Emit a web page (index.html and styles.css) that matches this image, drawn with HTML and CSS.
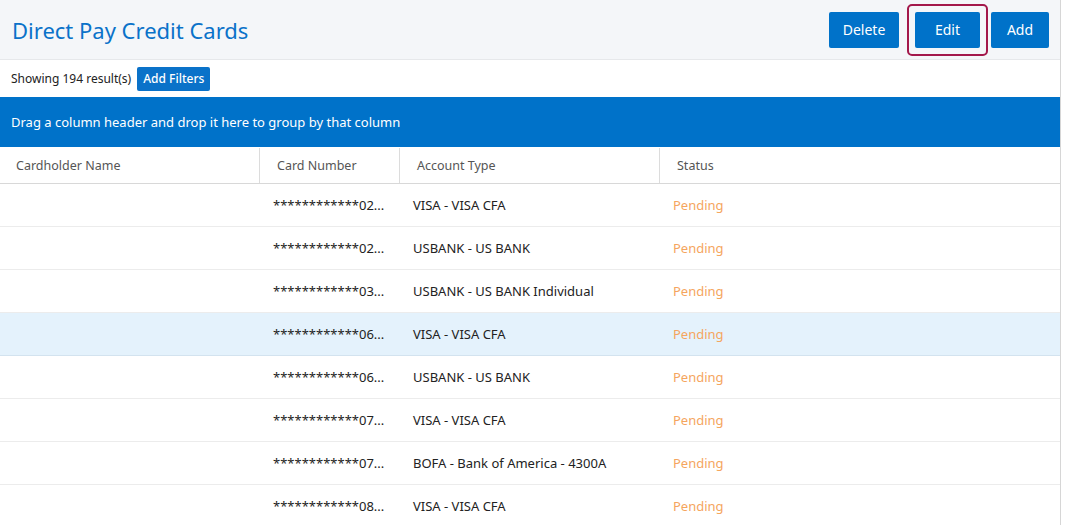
FILE: index.html
```html
<!DOCTYPE html>
<html lang="en">
<head>
  <meta charset="UTF-8">
  <title>Direct Pay Credit Cards</title>
  <link rel="stylesheet" href="styles.css">
</head>
<body>
  <div class="page">
    <div class="header">
      <div class="title">Direct Pay Credit Cards</div>
      <div class="actions">
        <button class="btn btn-delete">Delete</button>
        <span class="focus-ring"><button class="btn btn-edit">Edit</button></span>
        <button class="btn btn-add">Add</button>
      </div>
    </div>
    <div class="toolbar">
      <span class="count">Showing 194 result(s)</span>
      <button class="btn-small">Add Filters</button>
    </div>
    <div class="group-bar">Drag a column header and drop it here to group by that column</div>
    <div class="grid">
      <div class="row head">
        <div class="cell c-name">Cardholder Name</div>
        <div class="cell c-num">Card Number</div>
        <div class="cell c-type">Account Type</div>
        <div class="cell c-status">Status</div>
      </div>
      <div class="row">
        <div class="cell c-name"></div>
        <div class="cell c-num">************02...</div>
        <div class="cell c-type">VISA - VISA CFA</div>
        <div class="cell c-status pending">Pending</div>
      </div>
      <div class="row">
        <div class="cell c-name"></div>
        <div class="cell c-num">************02...</div>
        <div class="cell c-type">USBANK - US BANK</div>
        <div class="cell c-status pending">Pending</div>
      </div>
      <div class="row">
        <div class="cell c-name"></div>
        <div class="cell c-num">************03...</div>
        <div class="cell c-type">USBANK - US BANK Individual</div>
        <div class="cell c-status pending">Pending</div>
      </div>
      <div class="row selected">
        <div class="cell c-name"></div>
        <div class="cell c-num">************06...</div>
        <div class="cell c-type">VISA - VISA CFA</div>
        <div class="cell c-status pending">Pending</div>
      </div>
      <div class="row">
        <div class="cell c-name"></div>
        <div class="cell c-num">************06...</div>
        <div class="cell c-type">USBANK - US BANK</div>
        <div class="cell c-status pending">Pending</div>
      </div>
      <div class="row">
        <div class="cell c-name"></div>
        <div class="cell c-num">************07...</div>
        <div class="cell c-type">VISA - VISA CFA</div>
        <div class="cell c-status pending">Pending</div>
      </div>
      <div class="row">
        <div class="cell c-name"></div>
        <div class="cell c-num">************07...</div>
        <div class="cell c-type">BOFA - Bank of America - 4300A</div>
        <div class="cell c-status pending">Pending</div>
      </div>
      <div class="row">
        <div class="cell c-name"></div>
        <div class="cell c-num">************08...</div>
        <div class="cell c-type">VISA - VISA CFA</div>
        <div class="cell c-status pending">Pending</div>
      </div>
    </div>
  </div>
</body>
</html>
```

FILE: styles.css
```css
body {
  margin: 0;
  font-family: "Noto Sans", "Open Sans", sans-serif;
  background: #fff;
  color: #222;
}
.page {
  width: 1060px;
  border-right: 1px solid #d6d6d6;
  height: 525px;
  overflow: hidden;
}
.header {
  display: flex;
  justify-content: space-between;
  align-items: center;
  height: 59px;
  background: #f4f6f9;
  border-bottom: 1px solid #e6e8eb;
  padding: 0 11px 0 12px;
}
.title {
  font-size: 22px;
  color: #0a72c9;
  margin-top: 1px;
}
.actions {
  display: flex;
  align-items: center;
}
.btn {
  background: #0072c9;
  color: #fff;
  border: none;
  border-radius: 2px;
  font-family: inherit;
  font-size: 14px;
  height: 36px;
  padding: 0;
  cursor: pointer;
}
.btn-delete { width: 70px; }
.btn-edit { width: 65px; }
.btn-add { width: 58px; }
.focus-ring {
  display: inline-flex;
  margin: 0 3px 0 8px;
  padding: 6px;
  border: 2px solid #a3184b;
  border-radius: 5px;
}
.toolbar {
  display: flex;
  align-items: center;
  height: 37px;
  padding: 0 11px;
  gap: 6px;
}
.count {
  font-size: 12px;
  color: #222;
}
.btn-small {
  background: #0a72c9;
  color: #fff;
  border: none;
  border-radius: 2px;
  font-family: inherit;
  font-size: 12px;
  font-weight: 500;
  height: 24px;
  padding: 0 6px;
}
.group-bar {
  background: #0072c9;
  color: #fff;
  font-size: 13px;
  font-weight: 400;
  height: 50px;
  display: flex;
  align-items: center;
  padding: 0 11px;
}
.row {
  display: flex;
  height: 42px;
  border-bottom: 1px solid #ececec;
  font-size: 13px;
}
.row.head {
  height: 36px;
  border-bottom: 1px solid #d8d8d8;
  color: #555;
  font-size: 12.5px;
  padding-top: 1px;
  box-sizing: border-box;
  height: 37px;
}
.row.selected {
  background: #e4f2fc;
  border-bottom-color: #d3e3ef;
}
.cell {
  display: flex;
  align-items: center;
  box-sizing: border-box;
}
.c-name { width: 260px; padding-left: 16px; }
.c-num { width: 140px; padding-left: 13px; }
.c-type { width: 260px; padding-left: 13px; }
.c-status { flex: 1; padding-left: 13px; }
.head .cell { border-right: 1px solid #dcdcdc; }
.head .c-num { padding-left: 17px; }
.head .c-type { padding-left: 17px; }
.head .c-status { padding-left: 17px; border-right: none; }
.pending {
  color: #f5a55e;
}
```
